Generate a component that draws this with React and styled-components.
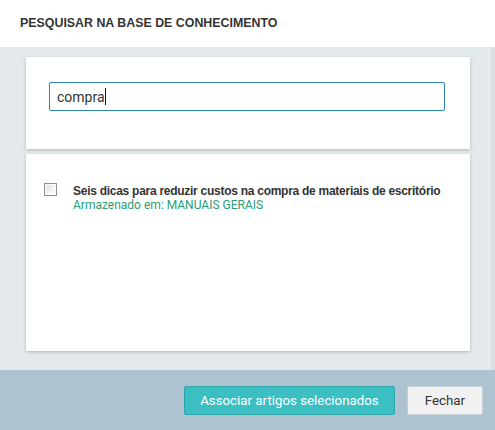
import React from 'react';
import styled, { createGlobalStyle } from 'styled-components';

const GlobalStyle = createGlobalStyle`
  html, body {
    margin: 0;
    padding: 0;
    height: 100%;
  }
  body {
    font-family: Roboto, "Liberation Sans", Arial, sans-serif;
    color: #333;
    overflow: hidden;
  }
  #root {
    height: 100%;
  }
`;

const articles = [
  {
    id: 1,
    title: 'Seis dicas para reduzir custos na compra de materiais de escritório',
    folder: 'MANUAIS GERAIS',
  },
];

const Modal = styled.div`
  display: flex;
  flex-direction: column;
  width: 495px;
  height: 430px;
  background: #fff;
`;

const Header = styled.div`
  height: 47px;
  display: flex;
  align-items: center;
  padding: 0 20px;
  box-sizing: border-box;
`;

const Title = styled.h3`
  margin: 0 0 1px;
  font-family: "Liberation Sans", Arial, sans-serif;
  font-weight: bold;
  font-size: 12.4px;
  color: #333;
`;

const Body = styled.div`
  flex: 1;
  display: flex;
  background: #e4e9ec;
`;

const Content = styled.div`
  flex: 1;
  display: flex;
  flex-direction: column;
  gap: 5px;
  padding: 10px 21px 19px 26px;
`;

const Track = styled.div`
  width: 4px;
  background: #d9dfe2;
`;

const Card = styled.div`
  background: #fff;
  box-shadow: 0 1px 3px rgba(0, 0, 0, 0.22);
  box-sizing: border-box;
  padding: ${(p) => p.$pad};
  flex: ${(p) => (p.$grow ? 1 : 'none')};
  height: ${(p) => p.$h || 'auto'};
`;

const Field = styled.div`
  height: 29px;
  box-sizing: border-box;
  border: 1px solid #2a87b6;
  border-radius: 2px;
  display: flex;
  align-items: center;
  padding: 0 7px;
  font-size: 14px;
  color: #333;
`;

const Caret = styled.span`
  display: inline-block;
  width: 1px;
  height: 17px;
  background: #111;
`;

const Row = styled.label`
  display: flex;
  align-items: flex-start;
  gap: 16px;
`;

const Check = styled.span`
  flex: none;
  width: 13px;
  height: 13px;
  box-sizing: border-box;
  border: 1px solid #8f8f8f;
  background: linear-gradient(135deg, #dcdcdc 0%, #f6f6f6 60%, #fff 100%);
  box-shadow: inset 0 0 0 1px #fbfbfb;
`;

const Info = styled.div`
  display: flex;
  flex-direction: column;
  margin-top: 1px;
`;

const ArticleTitle = styled.span`
  font-family: "Liberation Sans", Arial, sans-serif;
  font-weight: bold;
  font-size: 12px;
  line-height: 14px;
  letter-spacing: -0.27px;
  white-space: nowrap;
  color: #333;
`;

const Folder = styled.span`
  font-size: 12px;
  line-height: 14px;
  color: #2a9c78;
`;

const Footer = styled.div`
  height: 60px;
  background: #adc4d0;
  display: flex;
  justify-content: flex-end;
  align-items: flex-start;
  gap: 12px;
  padding: 16px 12px 0;
  box-sizing: border-box;
`;

const Button = styled.button`
  height: 29px;
  box-sizing: border-box;
  border-radius: 2px;
  font-family: Roboto, "Liberation Sans", Arial, sans-serif;
  font-size: 13.3px;
  padding: 0 ${(p) => (p.$primary ? '15px' : '17px')};
  cursor: pointer;
  border: 1px solid ${(p) => (p.$primary ? '#2fa6aa' : '#c6d1d7')};
  background: ${(p) => (p.$primary ? '#3bbfc3' : '#f1f1f1')};
  color: ${(p) => (p.$primary ? '#fff' : '#333')};
`;

export default function App() {
  return (
    <>
      <GlobalStyle />
      <Modal>
        <Header>
          <Title>PESQUISAR NA BASE DE CONHECIMENTO</Title>
        </Header>
        <Body>
          <Content>
            <Card $pad="25px 25px 0 23px" $h="92px">
              <Field>
                compra
                <Caret />
              </Field>
            </Card>
            <Card $pad="29px 24px 0 18px" $grow>
              {articles.map((a) => (
                <Row key={a.id}>
                  <Check />
                  <Info>
                    <ArticleTitle>{a.title}</ArticleTitle>
                    <Folder>Armazenado em: {a.folder}</Folder>
                  </Info>
                </Row>
              ))}
            </Card>
          </Content>
          <Track />
        </Body>
        <Footer>
          <Button $primary>Associar artigos selecionados</Button>
          <Button>Fechar</Button>
        </Footer>
      </Modal>
    </>
  );
}
